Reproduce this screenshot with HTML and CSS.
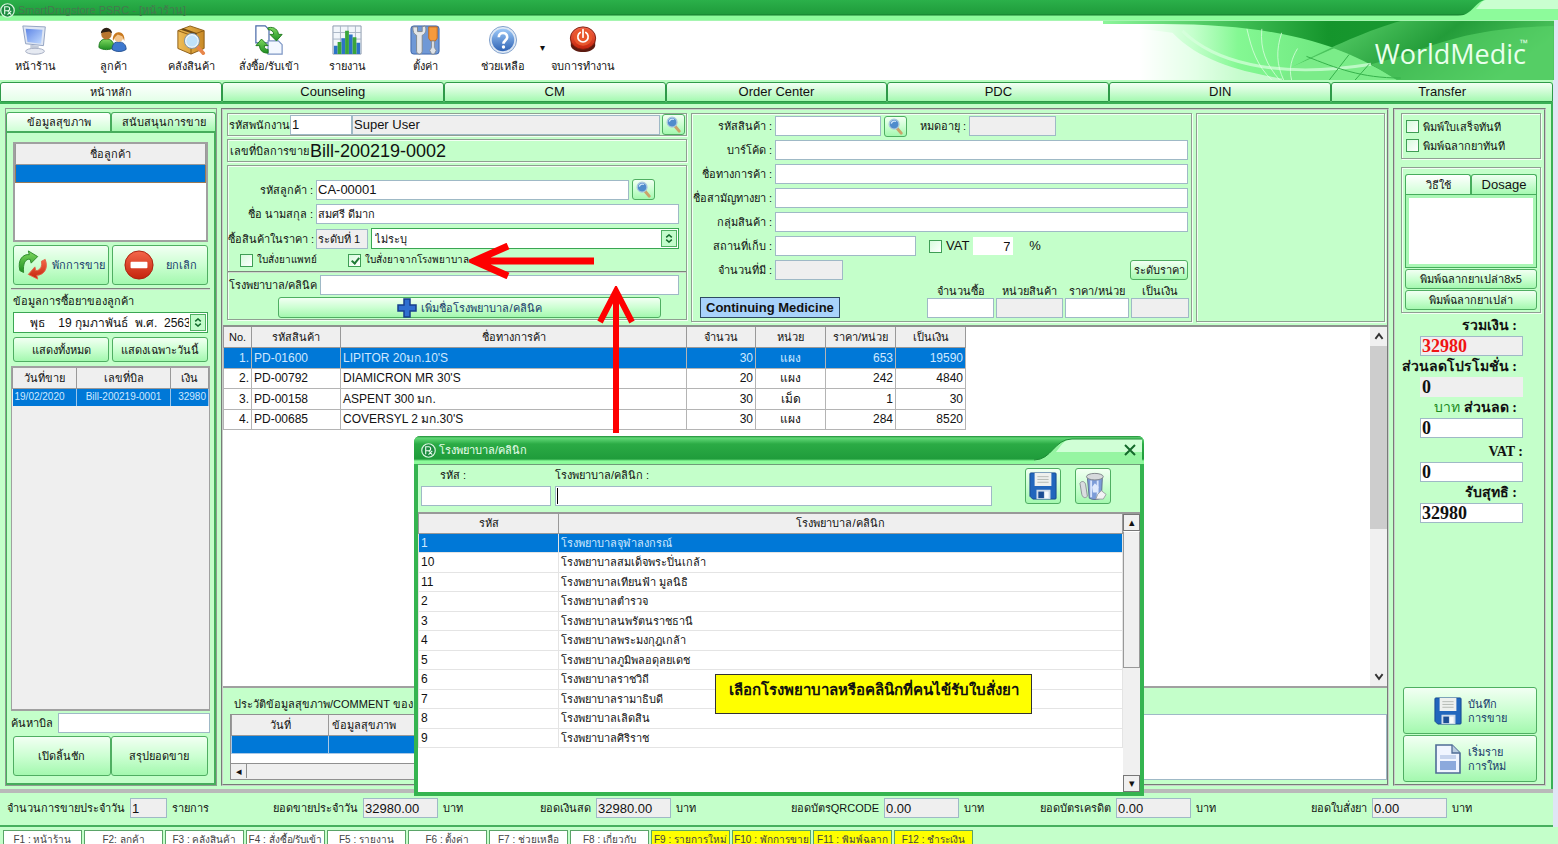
FILE: index.html
```html
<!DOCTYPE html>
<html lang="th">
<head>
<meta charset="utf-8">
<title>SmartDrugstore PSRC - [หน้าร้าน]</title>
<link rel="stylesheet" href="styles.css">
</head>
<body>
<svg class="defs" width="0" height="0" aria-hidden="true">
  <defs>
    <linearGradient id="gBlue" x1="0" y1="0" x2="0" y2="1"><stop offset="0" stop-color="#9cc8f8"/><stop offset="1" stop-color="#2f63b4"/></linearGradient>
    <linearGradient id="gScreen" x1="0" y1="0" x2="1" y2="1"><stop offset="0" stop-color="#5f86e6"/><stop offset="1" stop-color="#c3dcff"/></linearGradient>
    <linearGradient id="gGreen" x1="0" y1="0" x2="0" y2="1"><stop offset="0" stop-color="#7ed95f"/><stop offset="1" stop-color="#1f8f22"/></linearGradient>
    <linearGradient id="gRed" x1="0" y1="0" x2="0" y2="1"><stop offset="0" stop-color="#f4674a"/><stop offset="1" stop-color="#c4240c"/></linearGradient>
    <linearGradient id="gBox" x1="0" y1="0" x2="1" y2="0"><stop offset="0" stop-color="#efbd57"/><stop offset="1" stop-color="#c98a26"/></linearGradient>
  </defs>
  <symbol id="i-logo" viewBox="0 0 16 16"><circle cx="8" cy="8" r="7.2" fill="#1b8a3f" stroke="#d8f5de" stroke-width="1.3"/><path d="M5 12V4h3.2a2 2 0 0 1 0 4.2H5M8 8.2l4 4.3M12 8.5l-4 4" fill="none" stroke="#e8fbec" stroke-width="1.2"/></symbol>
  <symbol id="i-search" viewBox="0 0 18 18"><path d="M10 10l5 6" stroke="#caa36a" stroke-width="3.2" stroke-linecap="round"/><circle cx="7.5" cy="6.5" r="5.2" fill="#4f8ccc" stroke="#a9c6de" stroke-width="1.4"/><path d="M4.5 6a3.5 3.5 0 0 1 5-2.3" stroke="#cfe6fb" stroke-width="1.4" fill="none"/></symbol>
  <symbol id="i-floppy" viewBox="0 0 30 30"><path d="M2 1h26a1 1 0 0 1 1 1v26a1 1 0 0 1-1 1H4l-3-3V2a1 1 0 0 1 1-1z" fill="#2166bd" stroke="#17488e"/><path d="M6 1h18v14H6z" fill="#eef0ee"/><path d="M9 5h12M9 8h12M9 11h12" stroke="#b3b7b3"/><path d="M8 19h15v10H8z" fill="#cfdcea"/><path d="M10 21h6v7h-6z" fill="#1c4d94"/><path d="M17 21h4v7h-4z" fill="#f7fafc"/></symbol>
  <symbol id="i-spin" viewBox="0 0 8 8"><path d="M1.500 3L4 .8l2.500 2.200M1.500 5L4 7.200l2.500-2.200" fill="none" stroke="#146b2c" stroke-width="1.300"/></symbol>
</svg>

<div class="app">
  <header class="titlebar">
    <svg class="logo"><use href="#i-logo"/></svg>
    <h1 class="app-title">SmartDrugstore PSRC - [หน้าร้าน]</h1>
    <svg class="title-end" viewBox="0 0 100 20" preserveAspectRatio="none"><path d="M0 16C14 16 18 0 28 0H100V20H0z" fill="#8dfb9b"/><path d="M28 0H100V9H18C22 5 24 0 28 0z" fill="#c9ffd0"/></svg>
  </header>

  <nav class="toolbar" aria-label="เมนูหลัก">
    <button class="tool"><svg viewBox="0 0 32 32"><path d="M3 1l24 1-2 20L6 20z" fill="#dfe6f3" stroke="#8fa0c0"/><path d="M6 4l18 1-1.500 15L8 18z" fill="url(#gScreen)"/><path d="M11 21l9 1v4l-9-1z" fill="#c4ccda"/><ellipse cx="16" cy="28" rx="10" ry="3.200" fill="#e6eaf2" stroke="#a2abc0"/></svg><span>หน้าร้าน</span></button>
    <button class="tool"><svg viewBox="0 0 32 32"><path d="M1 24c0-7 3-9 8-9s8 3 8 9c-4 3-12 3-16 0z" fill="url(#gGreen)" stroke="#1d7a20"/><path d="M15 26c0-6 3-8 7-8s8 2 8 8c-4 3-11 3-15 0z" fill="#3d78cf" stroke="#24508f"/><circle cx="9" cy="10" r="5.500" fill="#b8752f"/><path d="M3 9a6 6 0 0 1 12 0l-3-2-7 1z" fill="#2e2015"/><circle cx="22" cy="13" r="5" fill="#f3c58c"/><path d="M16 17c-2-12 14-13 12 0l-2-5-5-2-3 3z" fill="#c8791f"/></svg><span>ลูกค้า</span></button>
    <button class="tool"><svg viewBox="0 0 32 32"><path d="M2 6l13-5 15 5v19l-14 6L2 25z" fill="url(#gBox)" stroke="#8a5a12"/><path d="M2 6l14 5 14-5M16 11v20" fill="none" stroke="#8a5a12"/><path d="M8 3.500l14 5v4l-3 1V9.500L5 5z" fill="#6f4a12"/><path d="M21 21l8 9" stroke="#e7864a" stroke-width="4" stroke-linecap="round"/><circle cx="17" cy="17" r="7" fill="#bfe2fb" stroke="#eef4f8" stroke-width="2"/><circle cx="17" cy="17" r="8" fill="none" stroke="#7790a6"/></svg><span>คลังสินค้า</span></button>
    <button class="tool"><svg viewBox="0 0 32 32"><path d="M2 1h10l4 4v14H2z" fill="#fff" stroke="#4a6aa8" stroke-width="1.300"/><path d="M15 17h11l4 4v10H15z" fill="#f3f8ff" stroke="#7c95c4" stroke-width="1.300"/><path d="M15 3c7-2 11 3 11 7h4l-6 7-7-7h4c0-3-2-5-6-5z" fill="url(#gGreen)" stroke="#1e7a1c"/><path d="M15 30c-7 0-9-4-9-8H2l6-7 7 7h-4c0 3 1 4 4 4z" fill="url(#gGreen)" stroke="#1e7a1c"/></svg><span>สั่งซื้อ/รับเข้า</span></button>
    <button class="tool"><svg viewBox="0 0 32 32"><path d="M1 1h30v30H1z" fill="#f2f6fb" stroke="#8a98ab"/><path d="M1 8h30M1 15h30M9 1v30M17 1v30M25 1v30" stroke="#a8b4c4"/><path d="M2 22h4v9H2zM10 14h4v17h-4zM18 10h4v21h-4zM26 19h4v12h-4z" fill="#2d73c8"/><path d="M6 18h4v13H6zM14 6h4v25h-4zM22 13h4v18h-4z" fill="#3aa63a"/></svg><span>รายงาน</span></button>
    <button class="tool"><svg viewBox="0 0 32 32"><rect x="1" y="1" width="30" height="30" rx="3" fill="#6f98d6" stroke="#3b62a6"/><path d="M3 2c0 5 1 8 4 9v17a3 3 0 0 0 6 0V11c4-2 5-6 3-10l-3 1v5H8V2z" fill="#e4e6e8" stroke="#7f868e"/><path d="M20 2h9v12l-2 3h-5l-2-3z" fill="#f59a3c" stroke="#c1681a"/><path d="M23 17h3v7l2 3-2 4h-3l-2-4 2-3z" fill="#dfe3e8" stroke="#858c94"/></svg><span>ตั้งค่า</span></button>
    <button class="tool"><svg viewBox="0 0 32 32"><circle cx="16" cy="16" r="14.500" fill="#dce7f4" stroke="#7f9fcb"/><circle cx="16" cy="16" r="12" fill="url(#gBlue)"/><path d="M11.500 13c0-6 9-6 9 0 0 3-4 3.500-4 7" fill="none" stroke="#fff" stroke-width="2.800"/><circle cx="16.500" cy="23.500" r="1.800" fill="#fff"/></svg><span>ช่วยเหลือ</span></button>
    <span class="tool-drop">▾</span>
    <button class="tool"><svg viewBox="0 0 32 32"><path d="M3 14v8c2 9 24 9 26 0v-8z" fill="#5c1a10"/><ellipse cx="16" cy="14" rx="13.500" ry="12" fill="url(#gRed)" stroke="#7b1d0f"/><ellipse cx="16" cy="13" rx="10" ry="9" fill="#e8562c"/><path d="M13 8a5.500 5.500 0 1 0 6 0M16 5v8" fill="none" stroke="#fff" stroke-width="1.800" stroke-linecap="round"/></svg><span>จบการทำงาน</span></button>
    <div class="banner">
      <svg viewBox="0 0 454 60" preserveAspectRatio="none">
        <defs>
          <linearGradient id="bA" x1="0" x2="1"><stop offset=".08" stop-color="#fff"/><stop offset=".2" stop-color="#c4ffcc"/><stop offset=".3" stop-color="#84f893"/><stop offset=".5" stop-color="#6fe880"/><stop offset="1" stop-color="#46c957"/></linearGradient>
          <linearGradient id="bB" x1="0" x2="1"><stop offset="0" stop-color="#8cf59a"/><stop offset=".3" stop-color="#3fbe54"/><stop offset=".5" stop-color="#15952c"/><stop offset="1" stop-color="#22a03a"/></linearGradient>
          <linearGradient id="bC" x1="0" x2="1" y2=".3"><stop offset="0" stop-color="#8cf79a"/><stop offset=".25" stop-color="#4cc45e"/><stop offset=".6" stop-color="#239c39"/><stop offset="1" stop-color="#4cc45d"/></linearGradient>
          <linearGradient id="bD" x1="0" x2=".25" y1="1" y2="0"><stop offset="0" stop-color="#fff"/><stop offset="1" stop-color="#fff" stop-opacity="0"/></linearGradient>
        </defs>
        <path d="M0 0H454V60H0z" fill="url(#bA)"/>
        <path d="M70 12C100 44 150 54 190 60H0V3z" fill="#fff" opacity=".55"/>
        <path d="M0 0H454V60H300C250 30 190 3 60 3H0z" fill="url(#bB)"/>
        <path d="M190 47C230 26 270 8 300 0H454V60H296C280 50 262 40 232 28z" fill="url(#bC)"/>
        <path d="M190 47L233 28Q262 38 296 60H180z" fill="#7bec89"/>
        <path d="M270 44C330 30 350 8 454 5V60H296z" fill="#5bd66b" opacity=".6"/>
        <path d="M80 10C110 40 170 60 270 44" fill="none" stroke="#d8ffde" stroke-width="3" opacity=".7"/>
        <path d="M145 8C150 30 155 45 170 60M160 8C158 30 165 45 178 60M180 12C174 30 175 45 182 60M196 28C190 38 187 48 190 60" fill="none" stroke="#e1ffe5" opacity=".75"/>
        <path d="M205 36C235 48 260 58 300 58M248 34L228 60M268 44L254 60" fill="none" stroke="#35b04a"/>
      </svg>
      <strong class="brand">WorldMedic</strong><span class="tm">™</span>
    </div>
  </nav>

  <nav class="pages" aria-label="หน้า">
    <button class="page on">หน้าหลัก</button><button class="page">Counseling</button><button class="page">CM</button><button class="page">Order Center</button><button class="page">PDC</button><button class="page">DIN</button><button class="page">Transfer</button>
  </nav>

  <main class="work">
    <aside class="left">
      <div class="subtabs"><button class="subtab on">ข้อมูลสุขภาพ</button><button class="subtab">สนับสนุนการขาย</button></div>
      <div class="left-body">
        <section class="customers">
          <table class="grid names"><thead><tr><th>ชื่อลูกค้า</th></tr></thead><tbody><tr class="sel"><td></td></tr></tbody></table>
        </section>
        <div class="pair tall-40">
          <button class="btn navy"><svg class="ic30" viewBox="0 0 32 32"><path d="M2 22C-1 10 6 4 12 5L11 1l10 6-7 7-1-4C8 9 5 14 6 24z" fill="url(#gGreen)" stroke="#2c8a2a"/><path d="M29 10c4 10-2 17-9 17l1 4-10-5 7-8 1 4c5 0 7-5 6-10z" fill="url(#gRed)" stroke="#e0644a"/></svg>พักการขาย</button>
          <button class="btn navy wide-gap"><svg class="ic30" viewBox="0 0 32 32"><circle cx="16" cy="16" r="15" fill="url(#gRed)" stroke="#a81d0c"/><rect x="7" y="12.500" width="18" height="7" rx="1" fill="#fff"/></svg>ยกเลิก</button>
        </div>
        <section class="history-filter">
          <label for="date">ข้อมูลการซื้อยาของลูกค้า</label>
          <span class="combo"><select id="date" class="date"><option>พุธ &nbsp;&nbsp; 19 กุมภาพันธ์ &nbsp;พ.ศ. &nbsp;2563</option></select><svg><use href="#i-spin"/></svg></span>
          <div class="pair"><button class="btn">แสดงทั้งหมด</button><button class="btn">แสดงเฉพาะวันนี้</button></div>
        </section>
        <section class="bills">
          <table class="grid"><colgroup><col class="w-date"><col><col class="w-amt"></colgroup><thead><tr><th>วันที่ขาย</th><th>เลขที่บิล</th><th>เงิน</th></tr></thead>
          <tbody><tr class="sel"><td>19/02/2020</td><td class="c">Bill-200219-0001</td><td class="r">32980</td></tr></tbody></table>
        </section>
        <div class="find"><label for="find">ค้นหาบิล</label><input id="find" class="field" type="text"></div>
        <div class="pair tall-40 flush"><button class="btn">เปิดลิ้นชัก</button><button class="btn">สรุปยอดขาย</button></div>
      </div>
    </aside>

    <section class="center">
      <div class="forms">
        <div class="sale">
          <div class="groove staff"><label for="staff">รหัสพนักงาน</label><input id="staff" class="field staff-id" value="1"><input class="field ro grow" aria-label="ชื่อพนักงาน" readonly value="Super User"><button class="btn find-btn" aria-label="ค้นหาพนักงาน"><svg><use href="#i-search"/></svg></button></div>
          <div class="groove bill"><span>เลขที่บิลการขาย</span><output class="bill-no">Bill-200219-0002</output></div>
          <div class="groove client">
            <div class="row"><label for="cid">รหัสลูกค้า :</label><input id="cid" class="field grow" value="CA-00001"><button class="btn find-btn inset" aria-label="ค้นหาลูกค้า"><svg><use href="#i-search"/></svg></button></div>
            <div class="row"><label for="cname">ชื่อ นามสกุล :</label><input id="cname" class="field grow th" value="สมศรี ดีมาก"></div>
            <div class="row"><label for="plevel">ซื้อสินค้าในราคา :</label><input id="plevel" class="field ro level th" readonly value="ระดับที่ 1"><span class="combo grow"><select aria-label="ประเภท"><option>ไม่ระบุ</option></select><svg><use href="#i-spin"/></svg></span></div>
            <div class="checks"><label><input type="checkbox" class="chk">ใบสั่งยาแพทย์</label><label><input type="checkbox" class="chk" checked>ใบสั่งยาจากโรงพยาบาล</label></div>
            <div class="hospital">
              <div class="hrow"><label for="hosp">โรงพยาบาล/คลินิค</label><input id="hosp" class="field grow"></div>
              <button class="btn navy add"><svg viewBox="0 0 20 20"><path d="M7 1h6v6h6v6h-6v6H7v-6H1V7h6z" fill="#2f6fd0" stroke="#173f8c" stroke-width="1.500"/></svg>เพิ่มชื่อโรงพยาบาล/คลินิค</button>
            </div>
          </div>
        </div>

        <div class="groove product">
          <div class="row"><label for="p1">รหัสสินค้า :</label><input id="p1" class="field w106"><button class="btn find-btn" aria-label="ค้นหาสินค้า"><svg><use href="#i-search"/></svg></button><label class="exp" for="exp">หมดอายุ :</label><input id="exp" class="field ro w87" readonly></div>
          <div class="row"><label for="p2">บาร์โค้ด :</label><input id="p2" class="field grow"></div>
          <div class="row"><label for="p3">ชื่อทางการค้า :</label><input id="p3" class="field grow"></div>
          <div class="row"><label for="p4">ชื่อสามัญทางยา :</label><input id="p4" class="field grow"></div>
          <div class="row"><label for="p5">กลุ่มสินค้า :</label><input id="p5" class="field grow"></div>
          <div class="row"><label for="p6">สถานที่เก็บ :</label><input id="p6" class="field w141"><span class="vat"><input type="checkbox" class="chk" id="vat"><label for="vat">VAT</label><input class="vat-rate" aria-label="อัตรา VAT" value="7"><span>%</span></span></div>
          <div class="row"><label for="p7">จำนวนที่มี :</label><input id="p7" class="field ro w68" readonly><button class="btn levels">ระดับราคา</button></div>
          <div class="buy">
            <button class="cont">Continuing Medicine</button>
            <label class="b68">จำนวนซื้อ<input class="field"></label><label class="b68">หน่วยสินค้า<input class="field ro" readonly></label><label class="b64">ราคา/หน่วย<input class="field"></label><label class="b58">เป็นเงิน<input class="field ro" readonly></label>
          </div>
        </div>
        <div class="groove blank"></div>
      </div>

      <div class="items">
        <div class="items-view">
          <table class="grid lines">
            <colgroup><col class="c28"><col class="c89"><col class="c346"><col class="c69"><col class="c70"><col class="c70"><col class="c70"></colgroup>
            <thead><tr><th>No.</th><th>รหัสสินค้า</th><th>ชื่อทางการค้า</th><th>จำนวน</th><th>หน่วย</th><th>ราคา/หน่วย</th><th>เป็นเงิน</th></tr></thead>
            <tbody>
              <tr class="sel"><td class="r">1.</td><td>PD-01600</td><td>LIPITOR 20มก.10'S</td><td class="r">30</td><td class="c">แผง</td><td class="r">653</td><td class="r">19590</td></tr>
              <tr><td class="r">2.</td><td>PD-00792</td><td>DIAMICRON MR 30'S</td><td class="r">20</td><td class="c">แผง</td><td class="r">242</td><td class="r">4840</td></tr>
              <tr><td class="r">3.</td><td>PD-00158</td><td>ASPENT 300 มก.</td><td class="r">30</td><td class="c">เม็ด</td><td class="r">1</td><td class="r">30</td></tr>
              <tr><td class="r">4.</td><td>PD-00685</td><td>COVERSYL 2 มก.30'S</td><td class="r">30</td><td class="c">แผง</td><td class="r">284</td><td class="r">8520</td></tr>
            </tbody>
          </table>
        </div>
        <div class="vbar"><svg viewBox="0 0 10 10"><path d="M2 7l3-4 3 4" fill="none" stroke="#333" stroke-width="1.500"/></svg><i></i><svg viewBox="0 0 10 10"><path d="M2 3l3 4 3-4" fill="none" stroke="#333" stroke-width="1.500"/></svg></div>
      </div>

      <div class="comments">
        <h2>ประวัติข้อมูลสุขภาพ/COMMENT ของ</h2>
        <div class="comments-row">
          <div class="comment-list">
            <table class="grid"><colgroup><col class="c97"><col></colgroup><thead><tr><th>วันที่</th><th class="l">ข้อมูลสุขภาพ</th></tr></thead><tbody><tr class="sel"><td></td><td></td></tr></tbody></table>
            <div class="hbar"><span>◂</span></div>
          </div>
          <textarea class="field" aria-label="รายละเอียด"></textarea>
        </div>
      </div>
    </section>

    <aside class="right">
      <div class="groove prints"><label><input type="checkbox" class="chk">พิมพ์ใบเสร็จทันที</label><label><input type="checkbox" class="chk">พิมพ์ฉลากยาทันที</label></div>
      <div class="groove usage">
        <div class="subtabs"><button class="subtab on">วิธีใช้</button><button class="subtab">Dosage</button></div>
        <div class="usage-box"><textarea aria-label="วิธีใช้"></textarea></div>
        <button class="btn">พิมพ์ฉลากยาเปล่า8x5</button><button class="btn">พิมพ์ฉลากยาเปล่า</button>
      </div>
      <div class="totals">
        <label for="t1">รวมเงิน :</label><input id="t1" class="field ro red" readonly value="32980">
        <label for="t2">ส่วนลดโปรโมชั่น :</label><input id="t2" class="field ro plain" readonly value="0">
        <label for="t3"><em>บาท</em> ส่วนลด :</label><input id="t3" class="field" value="0">
        <label for="t4" class="gap">VAT :</label><input id="t4" class="field" value="0">
        <label for="t5">รับสุทธิ :</label><input id="t5" class="field" value="32980">
      </div>
      <div class="finish">
        <button class="btn navy"><svg class="ic28"><use href="#i-floppy"/></svg><span>บันทึก<br>การขาย</span></button>
        <button class="btn navy"><svg class="ic28" viewBox="0 0 28 30"><path d="M2 1h16l8 8v20H2z" fill="#f0f5ff" stroke="#4f6c96" stroke-width="1.600"/><path d="M18 1v8h8" fill="#b9ccdf" stroke="#4f6c96" stroke-width="1.300"/><path d="M6 12h16M6 14h16" stroke="#9cb3dc"/><path d="M6 17h16v9H6z" fill="#8ca9dc"/></svg><span>เริ่มราย<br>การใหม่</span></button>
      </div>
    </aside>
  </main>

  <section class="summary">
    <div><label for="s1">จำนวนการขายประจำวัน</label><input id="s1" class="field ro short" readonly value="1"><span class="unit wide">รายการ</span></div>
    <div><label for="s2">ยอดขายประจำวัน</label><input id="s2" class="field ro" readonly value="32980.00"><span class="unit">บาท</span></div>
    <div><label for="s3">ยอดเงินสด</label><input id="s3" class="field ro" readonly value="32980.00"><span class="unit">บาท</span></div>
    <div><label for="s4">ยอดบัตรQRCODE</label><input id="s4" class="field ro" readonly value="0.00"><span class="unit">บาท</span></div>
    <div><label for="s5">ยอดบัตรเครดิต</label><input id="s5" class="field ro" readonly value="0.00"><span class="unit">บาท</span></div>
    <div><label for="s6">ยอดใบสั่งยา</label><input id="s6" class="field ro" readonly value="0.00"><span class="unit">บาท</span></div>
  </section>

  <footer class="keys">
    <button>F1 : หน้าร้าน</button><button>F2: ลูกค้า</button><button>F3 : คลังสินค้า</button><button>F4 : สั่งซื้อ/รับเข้า</button><button>F5 : รายงาน</button><button>F6 : ตั้งค่า</button><button>F7 : ช่วยเหลือ</button><button>F8 : เกี่ยวกับ</button><button class="hot">F9 : รายการใหม่</button><button class="hot">F10 : พักการขาย</button><button class="hot">F11 : พิมพ์ฉลาก</button><button class="hot">F12 : ชำระเงิน</button>
  </footer>
</div>

<div class="dialog" role="dialog" aria-labelledby="dlg-title">
  <header class="dlg-head">
    <svg class="logo"><use href="#i-logo"/></svg>
    <h2 id="dlg-title">โรงพยาบาล/คลินิก</h2>
    <svg class="dlg-end" viewBox="0 0 110 28" preserveAspectRatio="none"><path d="M0 24C18 24 20 3 38 3H108V28H0z" fill="#96f5a2"/><path d="M38 3H108V16H22C27 10 30 3 38 3z" fill="#d0ffd6"/><path d="M0 24C18 24 20 3 38 3H108" fill="none" stroke="#1d8a35"/></svg>
    <button class="close" aria-label="ปิด"><svg viewBox="0 0 12 12"><path d="M1 1l10 10M11 1L1 11" stroke="#14692b" stroke-width="2"/></svg></button>
  </header>
  <div class="dlg-form">
    <label class="code">รหัส :<input class="field"></label>
    <label class="name">โรงพยาบาล/คลินิก :<span class="field caret-box"><i></i><input></span></label>
    <button class="btn sq" aria-label="บันทึก"><svg><use href="#i-floppy"/></svg></button>
    <button class="btn sq" aria-label="ลบ"><svg viewBox="0 0 30 30"><path d="M9 6l16 0-1 22c-4 2-10 2-13 0z" fill="#7c9cd8" stroke="#5c6c8c"/><path d="M13 9v18M20 9v18" stroke="#d7e4fb" stroke-width="2"/><path d="M14 16l3-4 4 4-2 6h-4z" fill="#dfeafc"/><ellipse cx="17" cy="5" rx="9" ry="3.500" fill="#d6d9dc" stroke="#7d8288"/><path d="M1 12c2-3 5-2 6 1l2 13c-3 3-5 1-6-2z" fill="#dadde0" stroke="#8a8f94"/><path d="M20 24l4-4 5 4-3 5h-8z" fill="#f2f3f4" stroke="#9a9fa4"/></svg></button>
  </div>
  <div class="dlg-list">
    <div class="dlg-view">
      <table class="grid hosp"><colgroup><col class="c140"><col></colgroup><thead><tr><th>รหัส</th><th>โรงพยาบาล/คลินิก</th></tr></thead>
        <tbody>
          <tr class="sel"><td>1</td><td>โรงพยาบาลจุฬาลงกรณ์</td></tr>
          <tr><td>10</td><td>โรงพยาบาลสมเด็จพระปิ่นเกล้า</td></tr>
          <tr><td>11</td><td>โรงพยาบาลเทียนฟ้า มูลนิธิ</td></tr>
          <tr><td>2</td><td>โรงพยาบาลตำรวจ</td></tr>
          <tr><td>3</td><td>โรงพยาบาลนพรัตนราชธานี</td></tr>
          <tr><td>4</td><td>โรงพยาบาลพระมงกุฎเกล้า</td></tr>
          <tr><td>5</td><td>โรงพยาบาลภูมิพลอดุลยเดช</td></tr>
          <tr><td>6</td><td>โรงพยาบาลราชวิถี</td></tr>
          <tr><td>7</td><td>โรงพยาบาลรามาธิบดี</td></tr>
          <tr><td>8</td><td>โรงพยาบาลเลิดสิน</td></tr>
          <tr><td>9</td><td>โรงพยาบาลศิริราช</td></tr>
        </tbody></table>
    </div>
    <div class="sbar"><span>▴</span><i></i><span>▾</span></div>
  </div>
  <p class="note">เลือกโรงพยาบาลหรือคลินิกที่คนไข้รับใบสั่งยา</p>
</div>

<svg class="arrow arrow-left" viewBox="0 0 126 36"><path d="M125 18H8M39 3L5 18l34 15" fill="none" stroke="#fe0000" stroke-width="7"/></svg>
<svg class="arrow arrow-up" viewBox="0 0 40 148"><path d="M20 147V8M4 36L20 5l16 31" fill="none" stroke="#fe0000" stroke-width="6"/></svg>
</body>
</html>
```
FILE: styles.css
```css
* { box-sizing: border-box; }
body { margin: 0; height: 100vh; overflow: hidden; position: relative; background: #dfe6f5; color: #111; font: 11px/14px "Liberation Sans", "Noto Sans", sans-serif; }
button, input, select, textarea { font: inherit; color: inherit; margin: 0; padding: 0; border: 0; border-radius: 0; min-width: 0; }
button { cursor: pointer; background: none; }
h1, h2, p { margin: 0; font-size: inherit; font-weight: normal; }
svg { display: block; flex: none; }
.defs { position: absolute; }
.grow { flex: 1; }

.app { height: 100vh; display: flex; flex-direction: column; }

/* title and toolbar */
.titlebar { height: 20px; flex: none; display: flex; align-items: center; background: linear-gradient(#2bb04a 0, #1f9c3b 14px, #137a2b 15px, #8dfb9b 16px); }
.logo { width: 15px; height: 15px; }
.app-title { flex: 1; padding-left: 3px; color: #46784f; font-size: 11px; line-height: 15px; }
.title-end { width: 100px; height: 20px; }
.toolbar { height: 60px; flex: none; margin-right: 4px; display: flex; background: #fff; border-top: 1px solid #a6f5b1; }
.tool { width: 78px; flex: none; display: flex; flex-direction: column; align-items: center; gap: 4px; padding: 4px 8px 0 0; white-space: nowrap; }
.tool svg { width: 30px; height: 30px; }
.tool-drop { width: 8px; margin-left: -6px; padding-top: 20px; font-size: 10px; }
.banner { position: relative; margin-left: auto; width: 29%; }
.banner svg { width: 100%; height: 100%; }
.brand { position: absolute; right: 28px; top: 15px; color: #e9ffec; font: 400 27px/36px "Open Sans", sans-serif; }
.tm { position: absolute; right: 26px; top: 17px; color: #e9ffec; font-size: 9px; line-height: 10px; }
.pages { flex: none; height: 24px; margin-right: 5px; display: flex; background: #b8fcc0; padding-top: 2px; border-bottom: 2px solid #3ab055; }
.page { flex: 1; border: 1px solid #2f9a49; border-radius: 3px 3px 0 0; background: linear-gradient(#f4fff5, #a5f9b1); font-size: 13px; line-height: 18px; }
.page.on { background: linear-gradient(#fff, #e4ffe8); font-size: 11px; }

/* shared controls */
.btn { display: flex; align-items: center; justify-content: center; gap: 4px; border: 1px solid #4fae62; border-radius: 3px; background: linear-gradient(#f2fff3 0, #ccffd2 50%, #a4f8af 100%); white-space: nowrap; }
.navy { color: #173a6b; }
.field { height: 20px; border: 1px solid #9fb9c6; background: #fff; padding: 0 1px; font-size: 13px; line-height: 18px; }
.field.th { font-size: 11px; }
.ro { background: #efefef; }
.groove { border: 1px solid #8f9f92; box-shadow: inset 1px 1px 0 #f3fff4, 1px 1px 0 #f3fff4; }
.combo { display: flex; position: relative; height: 21px; border: 1px solid #3aa653; background: #fff; }
.combo select { appearance: none; background: none; flex: 1; padding: 0 18px 0 3px; }
.combo svg { position: absolute; right: 1px; top: 1px; width: 16px; height: 17px; padding: 3px 2px; border: 1px solid #4fae62; background: #c2fcca; pointer-events: none; }
.chk { appearance: none; width: 13px; height: 13px; flex: none; border: 1px solid #3f9d55; background: linear-gradient(135deg, #d6fbdc, #fff); }
.chk:checked { position: relative; }
.chk:checked::after { content: ""; position: absolute; left: 4px; top: 1px; width: 3px; height: 6px; border: solid #1f7a35; border-width: 0 2px 2px 0; transform: rotate(40deg); }
.find-btn { width: 23px; height: 21px; flex: none; }
.find-btn svg { width: 17px; height: 17px; }
.grid { border-collapse: collapse; table-layout: fixed; width: 100%; }
.grid th { height: 20px; padding: 0; background: #efefef; border: 1px solid #999; border-top: 0; font-weight: normal; text-align: center; }
.grid td { padding: 0 2px; white-space: nowrap; overflow: hidden; }
.grid .sel td { background: #0078d7; color: #cfe8ff; }
.grid .c { text-align: center; }
.grid .r { text-align: right; }
.grid .l { text-align: left; padding-left: 3px; }

.work { flex: 1; min-height: 0; margin-right: 5px; padding: 4px 5px 3px 5px; display: flex; gap: 4px; background: #c4ffca; border-right: 2px solid #3ab055; }

/* left column */
.left { width: 212px; flex: none; display: flex; flex-direction: column; border: 1px solid #909a91; padding-top: 3px; }
.subtabs { display: flex; }
.subtab { flex: 1; height: 19px; border: 1px solid #46ad5c; border-bottom: 0; border-radius: 3px 3px 0 0; background: linear-gradient(#eefff0, #a5f9b1); white-space: nowrap; }
.subtab.on { background: linear-gradient(#fff, #cfffd5); }
.left-body { flex: 1; min-height: 0; display: flex; flex-direction: column; border: 2px solid #46ad5c; border-width: 2px 2px 2px 1px; padding: 6px 4px 4px; }
.customers { height: 100px; flex: none; background: #fff; border: 2px solid #a0a0a0; margin: 3px 2px 0; }
.names .sel td { height: 18px; border: 1px solid #9a7a55; }
.pair { display: grid; grid-template-columns: 1fr 1fr; gap: 3px; }
.pair .btn { height: 25px; }
.tall-40 { padding: 3px 2px; }
.tall-40 .btn { height: 40px; }
.flush { gap: 0; }
.ic30 { width: 30px; height: 30px; }
.wide-gap { gap: 12px; }
.history-filter { border-top: 2px groove #ccd8cd; padding: 4px 2px; display: flex; flex-direction: column; gap: 4px; }
.date { font-size: 12px; }
.history-filter .date { padding-left: 16px; }
.bills { flex: 1; min-height: 0; background: #efefef; border: 2px solid #a0a0a0; border-width: 2px 1px; }
.bills td { height: 18px; font-size: 10px; border-right: 1px solid #9cc6ea; }
.w-date { width: 64px; }
.w-amt { width: 38px; }
.find { display: flex; gap: 6px; align-items: center; padding-top: 2px; }
.find .field { flex: 1; }
.find label { width: 41px; white-space: nowrap; }

/* centre column */
.center { flex: 1; min-width: 0; display: flex; flex-direction: column; border: 2px groove #c9cfca; }
.forms { flex: none; display: flex; gap: 4px; padding: 3px 2px; }
.sale { width: 462px; flex: none; padding-left: 2px; display: flex; flex-direction: column; gap: 3px; }
.staff { height: 23px; display: flex; align-items: center; padding: 0 1px; }
.staff label { width: 61px; white-space: nowrap; }
.staff-id { width: 62px; }
.staff .find-btn { margin-left: 2px; }
.bill { height: 23px; display: flex; align-items: center; gap: 1px; padding-left: 2px; }
.bill-no { font-size: 18px; line-height: 22px; }
.client { display: flex; flex-direction: column; gap: 4px; padding-top: 13px; }
.row { display: flex; align-items: center; gap: 3px; padding-right: 7px; }
.row > label:first-child { width: 85px; text-align: right; white-space: nowrap; }
.find-btn.inset { margin-right: 24px; }
.level { width: 52px; }
.checks { display: flex; gap: 31px; padding-left: 12px; height: 14px; font-size: 10px; }
.checks label { display: flex; align-items: center; gap: 4px; }
.hospital { border-top: 2px groove #ccd8cd; padding: 2px 7px 1px 1px; display: flex; flex-direction: column; gap: 2px; }
.hrow { display: flex; align-items: center; gap: 4px; }
.hrow label { width: 87px; white-space: nowrap; }
.add { height: 21px; margin: 0 18px 0 49px; }
.add svg { width: 20px; height: 20px; }

.product { width: 501px; flex: none; display: flex; flex-direction: column; gap: 4px; padding: 2px 0 3px; }
.product .row { padding-right: 3px; height: 20px; }
.product .row > label:first-child { width: 80px; }
.row .exp { width: 56px; text-align: right; }
.w106 { width: 106px; }
.w87 { width: 87px; }
.w141 { width: 141px; }
.w68 { width: 68px; }
.vat { display: flex; align-items: center; gap: 4px; margin-left: 10px; font-size: 13px; }
.vat-rate { width: 40px; height: 18px; text-align: right; padding-right: 3px; margin-right: 12px; background: #fff; }
.levels { margin-left: auto; width: 58px; height: 20px; }
.buy { display: flex; gap: 2px; align-items: flex-end; padding-right: 2px; }
.buy label { display: flex; flex-direction: column; text-align: center; white-space: nowrap; }
.cont { height: 21px; padding: 0 5px; margin: 0 auto 0 8px; border: 1px solid #2e4a63; background: #a9d3fb; font-weight: bold; font-size: 13px; line-height: 18px; }
.b68 { width: 67px; }
.b64 { width: 64px; }
.b58 { width: 58px; }
.blank { flex: 1; }

.items { flex: 1; min-height: 0; display: flex; background: #fff; border-top: 2px solid #8d928e; border-bottom: 2px solid #a0a0a0; }
.items-view { flex: 1; min-width: 0; }
.lines { width: 743px; }
.c28 { width: 28px; } .c89 { width: 89px; } .c346 { width: 346px; } .c69 { width: 69px; } .c70 { width: 70px; }
.c97 { width: 97px; } .c140 { width: 140px; }
.lines td { height: 20px; border: 1px solid #b4b4b4; font-size: 12px; }
.lines tr:nth-child(odd) td { height: 21px; }
.vbar { width: 17px; background: #f0f0f0; display: flex; flex-direction: column; align-items: center; }
.vbar svg { width: 12px; height: 19px; }
.vbar i { width: 17px; height: 51%; margin-bottom: auto; background: #cdcdcd; }

.comments { flex: none; padding: 8px 0 4px 7px; }
.comments h2 { padding-left: 4px; line-height: 17px; }
.comments-row { display: flex; gap: 4px; margin-top: 1px; }
.comment-list { flex: 1; height: 66px; display: flex; flex-direction: column; justify-content: space-between; border: 1px solid #909090; background: #fff; }
.comment-list .sel td { height: 18px; border: 1px solid #a9c8e6; }
.comments textarea { width: 40%; height: 66px; resize: none; }
.hbar { height: 16px; background: #efefef; border-top: 1px solid #909090; }
.hbar span { display: block; width: 16px; border-right: 1px solid #909090; text-align: center; }

/* right column */
.right { width: 153px; flex: none; display: flex; flex-direction: column; border: 2px groove #c9cfca; padding: 3px 3px 2px 6px; }
.prints { height: 46px; flex: none; display: flex; flex-direction: column; justify-content: center; gap: 5px; padding-left: 4px; }
.prints label { display: flex; align-items: center; gap: 4px; }
.usage { margin-top: 8px; padding: 6px 3px 2px; display: flex; flex-direction: column; gap: 1px; }
.usage .subtab { height: 20px; }
.usage .subtab + .subtab { font-size: 13px; }
.usage-box { border: 1px solid #46ad5c; background: #aaf7b5; padding: 3px; margin-top: -1px; }
.usage-box textarea { display: block; width: 100%; height: 66px; background: #fff; resize: none; }
.usage .btn { height: 20px; }
.totals { display: flex; flex-direction: column; padding: 2px 18px 0 0; font: bold 14px/18px "Liberation Serif", "Noto Sans", serif; }
.totals label { text-align: right; white-space: nowrap; padding-right: 6px; line-height: 21px; }
.totals label.gap { padding-top: 3px; padding-right: 0; }
.totals em { font-style: normal; font-weight: normal; color: #1c8a1c; }
.totals .field { margin-left: 19px; font-size: 18px; }
.totals .plain { border-color: #efefef; }
.totals .red { color: #f01414; }
.finish { margin-top: auto; display: flex; flex-direction: column; gap: 1px; padding: 0 4px 0 2px; }
.finish .btn { height: 47px; gap: 6px; text-align: left; }
.ic28 { width: 28px; height: 30px; }

/* bottom bars */
.summary { flex: none; height: 38px; margin-right: 5px; padding-top: 5px; display: grid; grid-template-columns: 210fr 257fr 233fr 288fr 232fr 256fr 77fr; background: #c4ffca; border-top: 4px solid #b9b9b9; border-bottom: 2px solid #46b05e; }
.summary div { display: flex; gap: 5px; justify-content: flex-end; white-space: nowrap; line-height: 20px; }
.summary .field { width: 75px; }
.summary .short { width: 37px; }
.unit { width: 24px; }
.unit.wide { width: 38px; }
.keys { flex: none; height: 17px; display: flex; gap: 2px; padding: 3px 0 0 3px; background: #c4ffca; overflow: hidden; }
.keys button { width: 79px; height: 20px; border: 1px solid #5aa468; background: #fff; white-space: nowrap; color: #444; font-size: 10px; }
.keys .hot { background: #ff0; }

/* hospital dialog */
.dialog { position: absolute; left: 414px; top: 436px; width: 730px; height: 360px; display: flex; flex-direction: column; border: 4px solid #35b450; border-top: 0; border-radius: 6px 6px 0 0; background: #c4ffca; }
.dlg-head { flex: none; height: 28px; display: flex; align-items: center; margin: 0 -4px; padding-left: 7px; border-radius: 6px 6px 0 0; overflow: hidden; background: linear-gradient(#1d8a35 0, #62d877 2px, #2bab45 8px, #1f9c3b 23px, #8dfb9b 25px); color: #eaffed; }
.dlg-head h2 { flex: 1; padding-left: 3px; }
.dlg-end { width: 110px; height: 28px; }
.close { width: 12px; height: 12px; margin: 0 8px 0 -20px; }
.dlg-form { flex: none; height: 48px; display: flex; gap: 4px; align-items: flex-start; padding: 3px 29px 0 3px; border-top: 1px solid #6f9c78; }
.dlg-form label { display: flex; flex-direction: column; gap: 4px; }
.code { width: 130px; text-indent: 19px; }
.name { flex: 1; max-width: 437px; }
.caret-box { display: flex; align-items: center; height: 20px; }
.caret-box i { width: 1px; height: 16px; background: #000; }
.caret-box input { flex: 1; background: none; outline: 0; }
.dlg-form .sq { width: 36px; height: 36px; margin-left: auto; }
.dlg-form .sq + .sq { margin-left: 10px; }
.sq svg { width: 28px; height: 30px; }
.dlg-list { flex: 1; min-height: 0; display: flex; background: #fff; border-top: 2px solid #999; }
.dlg-view { flex: 1; min-width: 0; }
.hosp th { height: 19px; }
.hosp td { height: 19px; border: 1px solid #e4e4e4; }
.hosp tr:nth-child(even) td { height: 20px; }
.hosp td:first-child { font-size: 12px; }
.sbar { width: 17px; flex: none; background: #f0f0f0; display: flex; flex-direction: column; }
.sbar span { height: 17px; border: 1px solid #777; text-align: center; line-height: 15px; }
.sbar i { height: 137px; margin-bottom: auto; border: 1px solid #999; border-top-color: #fff; background: #f0f0f0; }
.note { position: absolute; left: 297px; top: 238px; width: 317px; height: 40px; border: 1px solid #333; background: #ff0; text-align: center; font: bold 15px/30px "Liberation Sans", "Noto Sans", sans-serif; white-space: nowrap; }

.arrow { position: absolute; pointer-events: none; }
.arrow-left { left: 469px; top: 243px; width: 126px; height: 36px; }
.arrow-up { left: 596px; top: 286px; width: 40px; height: 148px; }
```
